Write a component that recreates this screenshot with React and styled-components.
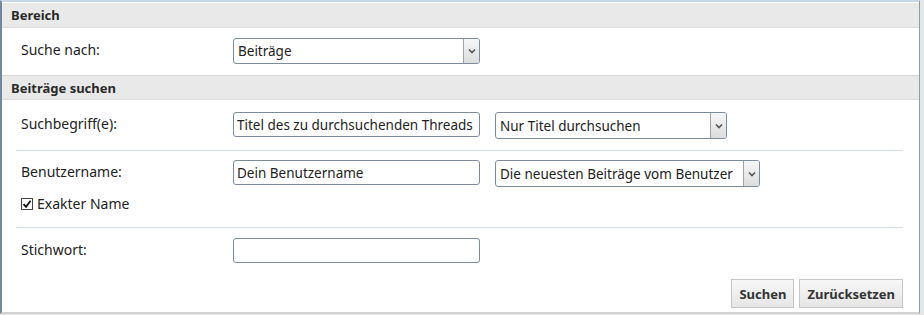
import React from 'react';
import styled, { createGlobalStyle } from 'styled-components';

const GlobalStyle = createGlobalStyle`
  html, body {
    margin: 0;
    padding: 0;
    background: #e6e6e6;
  }
  body {
    font-family: 'Noto Sans', 'Open Sans', sans-serif;
    font-size: 13px;
    color: #222;
  }
`;

const Frame = styled.form`
  width: 917px;
  height: 310px;
  background: #fff;
  border-top: 2px solid #c9d8e8;
  border-left: 2px solid #6f879f;
  border-right: 1px solid #8d9cab;
  border-bottom: 2px solid #d2d2d2;
  display: flex;
  flex-direction: column;
`;

const SectionHead = styled.div`
  height: 25px;
  margin-top: ${(p) => (p.first ? '1px' : '0')};
  box-sizing: border-box;
  padding: 0 9px;
  display: flex;
  align-items: center;
  background: #e9e9e9;
  border-top: ${(p) => (p.first ? 'none' : '1px solid #d6d6d6')};
  border-bottom: 1px solid #dcdcdc;
  font-weight: 700;
  font-size: 13px;
  color: #2a2a2a;
`;

const Row = styled.div`
  display: grid;
  grid-template-columns: 212px 1fr;
  margin: 0 16px 0 14px;
  padding: ${(p) => p.pad || '10px 0 11px 5px'};
  border-bottom: ${(p) => (p.divider ? '1px solid #d3dde7' : 'none')};
`;

const Label = styled.div`
  padding-top: 2px;
  font-size: 14px;
  color: #222;
`;

const Controls = styled.div`
  display: flex;
  align-items: flex-start;
  gap: 15px;
`;

const TextInput = styled.input`
  width: 247px;
  height: 25px;
  box-sizing: border-box;
  padding: 0 3px;
  border: 1px solid #7c8c9c;
  border-radius: 3px;
  font-family: inherit;
  font-size: 13.5px;
  color: #222;
  background: #fff;
  outline: none;
`;

const SelectWrap = styled.div`
  display: flex;
  width: ${(p) => p.w}px;
  height: ${(p) => p.h || 27}px;
  box-sizing: border-box;
  border: 1px solid #7c8c9c;
  border-radius: 3px;
  background: #fff;
`;

const NativeSelect = styled.select`
  flex: 1;
  min-width: 0;
  appearance: none;
  border: none;
  background: transparent;
  padding: 0 4px;
  font-family: inherit;
  font-size: 13.5px;
  color: #222;
  outline: none;
`;

const Arrow = styled.span`
  width: 16px;
  box-sizing: border-box;
  border-left: 1px solid #a3a3a3;
  background: linear-gradient(#f7f7f7, #dcdcdc);
  border-radius: 0 2px 2px 0;
  display: flex;
  align-items: center;
  justify-content: center;
  pointer-events: none;
`;

const CheckLine = styled.label`
  grid-column: 1 / -1;
  display: flex;
  align-items: center;
  gap: 4px;
  margin-top: 7px;
  font-size: 14px;
  color: #222;
`;

const Box = styled.span`
  width: 12px;
  height: 12px;
  box-sizing: border-box;
  border: 1px solid #444;
  background: #fff;
  display: flex;
  align-items: center;
  justify-content: center;
`;

const Actions = styled.div`
  display: flex;
  justify-content: flex-end;
  gap: 5px;
  margin: 16px 16px 0 0;
`;

const Button = styled.button`
  height: 29px;
  padding: 0 7px;
  border: 1px solid #c6c6c6;
  background: linear-gradient(#f7f7f7, #e6e6e6);
  font-family: inherit;
  font-weight: 700;
  font-size: 13px;
  color: #333;
  cursor: pointer;
`;

const Chevron = () => (
  <svg width="8" height="6" viewBox="0 0 8 6">
    <path d="M1 1.5 L4 4.5 L7 1.5" fill="none" stroke="#555" strokeWidth="1.6" />
  </svg>
);

const Select = ({ w, h, options }) => (
  <SelectWrap w={w} h={h}>
    <NativeSelect defaultValue={options[0]}>
      {options.map((o) => (
        <option key={o}>{o}</option>
      ))}
    </NativeSelect>
    <Arrow>
      <Chevron />
    </Arrow>
  </SelectWrap>
);

const App = () => (
  <>
    <GlobalStyle />
    <Frame onSubmit={(e) => e.preventDefault()}>
      <SectionHead first>Bereich</SectionHead>
      <Row pad="10px 0 11px 5px">
        <Label>Suche nach:</Label>
        <Controls>
          <Select w={247} h={26} options={['Beiträge', 'Themen']} />
        </Controls>
      </Row>
      <SectionHead>Beiträge suchen</SectionHead>
      <Row divider pad="12px 0 11px 5px">
        <Label>Suchbegriff(e):</Label>
        <Controls>
          <TextInput defaultValue="Titel des zu durchsuchenden Threads" />
          <Select w={232} options={['Nur Titel durchsuchen', 'Ganze Beiträge durchsuchen']} />
        </Controls>
      </Row>
      <Row divider pad="9px 0 14px 5px">
        <Label>Benutzername:</Label>
        <Controls>
          <TextInput defaultValue="Dein Benutzername" />
          <Select w={265} options={['Die neuesten Beiträge vom Benutzer', 'Themen vom Benutzer']} />
        </Controls>
        <CheckLine>
          <Box>
            <svg width="10" height="10" viewBox="0 0 10 10">
              <path d="M1.6 5.2 L4 7.8 L8.6 1.8" fill="none" stroke="#111" strokeWidth="1.8" />
            </svg>
          </Box>
          Exakter Name
        </CheckLine>
      </Row>
      <Row pad="10px 0 0 5px">
        <Label>Stichwort:</Label>
        <Controls>
          <TextInput />
        </Controls>
      </Row>
      <Actions>
        <Button type="submit">Suchen</Button>
        <Button type="reset">Zurücksetzen</Button>
      </Actions>
    </Frame>
  </>
);

export default App;
